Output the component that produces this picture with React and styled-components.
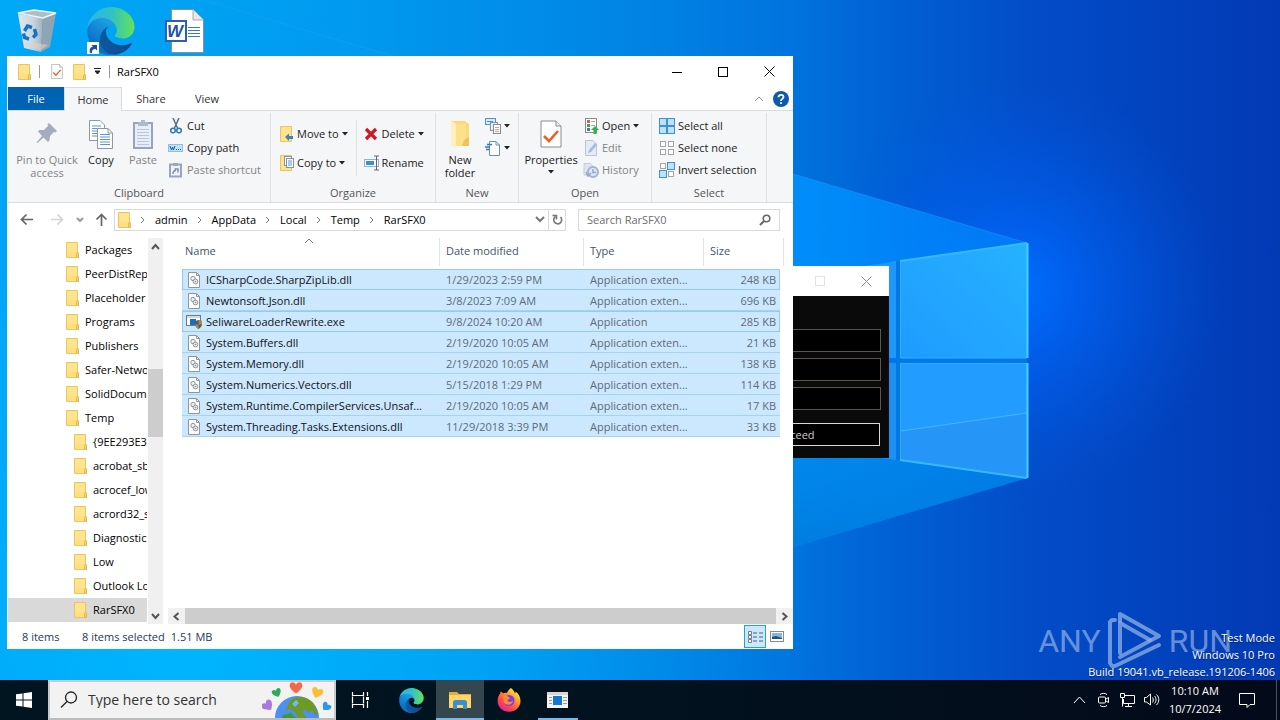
import styled, { createGlobalStyle, css } from "styled-components";

const GlobalStyle = createGlobalStyle`
  * {
    box-sizing: border-box;
  }
  body {
    margin: 0;
    overflow: hidden;
    font-family: "Open Sans", "Noto Sans", sans-serif;
    font-size: 11px;
    line-height: 16px;
    color: #111;
  }
  button, input {
    font: inherit;
    color: inherit;
    border: 0;
    padding: 0;
    margin: 0;
    background: none;
    border-radius: 0;
    outline: none;
  }
  a {
    color: inherit;
    text-decoration: none;
  }
  svg {
    display: block;
    flex: none;
  }
`;

const Screen = styled.div`
  height: 100vh;
  display: flex;
  flex-direction: column;
`;
const Desktop = styled.main`
  position: relative;
  flex: 1;
  min-height: 0;
  overflow: hidden;
  background: #0a7be0;
`;
const WallpaperSvg = styled.svg`
  position: absolute;
  inset: 0;
  width: 100%;
  height: 100%;
`;
const Shortcuts = styled.div`
  position: relative;
  display: flex;
  padding: 7px 0 0 12px;
`;
const Shortcut = styled.button`
  width: 50px;
  height: 48px;
  margin-right: 24px;
  display: flex;
  justify-content: center;
`;

const ExplorerWindow = styled.section`
  position: absolute;
  top: 56px;
  left: 7px;
  right: 487px;
  bottom: 31px;
  display: flex;
  flex-direction: column;
  background: #fff;
  padding: 0 0 0 1px;
`;
const TitleBar = styled.header`
  height: 31px;
  display: flex;
  align-items: center;
  padding: 0 1px 0 10px;
`;
const QuickButton = styled.button`
  width: ${(p) => p.$w}px;
  display: flex;
  justify-content: flex-start;
`;
const TitleLine = styled.span`
  width: 1px;
  height: 13px;
  background: #999;
  margin-right: ${(p) => p.$gap}px;
`;
const Title = styled.h1`
  flex: 1;
  margin: 0;
  font-size: 11px;
  font-weight: 400;
  color: #000;
`;
const CaptionButton = styled.button`
  width: 46px;
  height: 30px;
  display: flex;
  align-items: center;
  justify-content: center;
`;
const TabRow = styled.nav`
  height: 24px;
  display: flex;
  align-items: stretch;
  border-bottom: 1px solid #dadbdc;
`;
const Tab = styled.button`
  width: 56px;
  color: #333;
  ${(p) =>
    p.$file &&
    css`
      background: #0063b1;
      color: #fff;
    `}
  ${(p) =>
    p.$active &&
    css`
      width: 58px;
      margin: 0 1px -1px 0;
      background: #f5f6f7;
      border: 1px solid #dadbdc;
      border-bottom: 0;
    `}
`;
const TabTools = styled.div`
  margin-left: auto;
  display: flex;
  align-items: center;
  gap: 9px;
  padding-right: 4px;
`;

const Ribbon = styled.div`
  height: 92px;
  display: flex;
  background: #f5f6f7;
  border-bottom: 1px solid #dadbdc;
`;
const Group = styled.div`
  width: ${(p) => p.$w}px;
  margin: 2px 0 0;
  display: flex;
  flex-direction: column;
  border-right: 1px solid #dfe1e3;
`;
const GroupBody = styled.div`
  flex: 1;
  display: flex;
  padding: 2px 0 0 ${(p) => p.$pad}px;
`;
const GroupName = styled.div`
  text-align: center;
  color: #555;
  padding-bottom: 1px;
`;
const BigButton = styled.button`
  width: ${(p) => p.$w}px;
  display: flex;
  flex-direction: column;
  align-items: center;
  padding-top: 3px;
  line-height: 13px;
  color: ${(p) => (p.$off ? "#838383" : "#222")};
  svg:first-child {
    margin-bottom: 3px;
  }
`;
const SmallColumn = styled.div`
  display: flex;
  flex-direction: column;
  padding-left: ${(p) => p.$pad || 0}px;
  padding-top: ${(p) => (p.$tall ? 4 : 0)}px;
`;
const SmallButton = styled.button`
  height: ${(p) => (p.$tall ? 29 : 22)}px;
  display: flex;
  align-items: center;
  gap: 3px;
  white-space: nowrap;
  color: ${(p) => (p.$off ? "#838383" : "#222")};
`;
const Divider = styled.span`
  width: 1px;
  height: 56px;
  margin: 5px 0 0 8px;
  background: #e0e2e4;
`;

const AddressRow = styled.div`
  height: 35px;
  display: flex;
  align-items: center;
  padding: 0 13px 2px 12px;
`;
const NavButton = styled.button`
  width: ${(p) => p.$w}px;
  display: flex;
`;
const AddressBox = styled.div`
  flex: 1;
  height: 22px;
  display: flex;
  align-items: center;
  border: 1px solid #d9d9d9;
  padding-left: 3px;
  margin-right: 12px;
`;
const Crumb = styled.a`
  color: #000;
`;
const CrumbArrow = styled.span`
  width: 24px;
  display: flex;
  justify-content: center;
`;
const AddressEnd = styled.button`
  width: 17px;
  height: 20px;
  display: flex;
  align-items: center;
  justify-content: center;
  ${(p) => p.$line && "border-left: 1px solid #d9d9d9;"}
  ${(p) => p.$push && "margin-left: auto;"}
`;
const SearchBox = styled.label`
  width: 202px;
  height: 22px;
  display: flex;
  align-items: center;
  border: 1px solid #d9d9d9;
  padding: 0 8px;
`;
const SearchInput = styled.input`
  flex: 1;
  min-width: 0;
  &::placeholder {
    color: #6d6d6d;
    opacity: 1;
  }
`;

const Panes = styled.div`
  flex: 1;
  min-height: 0;
  display: flex;
`;
const Tree = styled.nav`
  width: 140px;
  overflow: hidden;
`;
const TreeItem = styled.a`
  height: 24px;
  display: flex;
  align-items: center;
  gap: 6px;
  padding-left: ${(p) => (p.$child ? 66 : 58)}px;
  margin-right: 1px;
  white-space: nowrap;
  overflow: hidden;
  color: #000;
  background: ${(p) => (p.$current ? "#d9d9d9" : "transparent")};
`;
const VScroll = styled.div`
  width: 15px;
  display: flex;
  flex-direction: column;
  align-items: center;
  background: #f0f0f0;
`;
const ScrollButton = styled.button`
  width: 17px;
  height: 16px;
  display: flex;
  align-items: center;
  justify-content: center;
`;
const VThumb = styled.div`
  width: 100%;
  height: 68px;
  margin: 115px 0 auto;
  background: #cdcdcd;
`;
const FilePane = styled.div`
  flex: 1;
  min-width: 0;
  display: flex;
  flex-direction: column;
  padding-left: 5px;
`;
const TableWrap = styled.div`
  flex: 1;
  min-height: 0;
  padding: 0 13px 0 14px;
`;
const FileTable = styled.table`
  width: 100%;
  table-layout: fixed;
  border-spacing: 0;
`;
const Th = styled.th`
  position: relative;
  height: 31px;
  padding: 0 0 6px ${(p) => (p.$first ? 3 : 7)}px;
  text-align: left;
  font-weight: 400;
  color: #43536e;
  &::after {
    content: "";
    position: absolute;
    top: 0;
    right: ${(p) => (p.$last ? -4 : -1)}px;
    width: 1px;
    height: 28px;
    background: #e0e3e8;
  }
`;
const SortMark = styled.span`
  position: absolute;
  top: 0;
  left: 122px;
`;
const Row = styled.tr`
  background: #cce8ff;
  ${(p) =>
    p.$outlined &&
    css`
      outline: 1px solid #93cbf2;
      outline-offset: -1px;
    `}
`;
const Td = styled.td`
  height: 21px;
  padding: 0 4px 0 7px;
  box-shadow: inset 0 -1px #a6d3f4;
  white-space: nowrap;
  overflow: hidden;
  text-overflow: ellipsis;
  color: #5d6b78;
  text-align: ${(p) => (p.$right ? "right" : "left")};
`;
const FileName = styled.span`
  display: flex;
  align-items: center;
  gap: 4px;
  margin-left: -3px;
  color: #111;
`;
const HScroll = styled.div`
  height: 16px;
  display: flex;
  align-items: center;
  background: #f0f0f0;
`;
const HThumb = styled.div`
  flex: 1;
  height: 16px;
  background: #cdcdcd;
`;
const StatusBar = styled.footer`
  height: 25px;
  display: flex;
  align-items: center;
  padding: 0 5px 0 14px;
  color: #24385e;
  span:first-child {
    width: 60px;
  }
  span:nth-child(2) {
    margin-right: 6px;
  }
`;
const ViewButton = styled.button`
  width: 22px;
  height: 23px;
  display: flex;
  align-items: center;
  justify-content: center;
  ${(p) => p.$on && "background: #cce8ff; border: 1px solid #26a0da;"}
`;
const ViewButtons = styled.div`
  display: flex;
  margin-left: auto;
`;

const LoaderWindow = styled.section`
  position: absolute;
  top: 266px;
  right: 391px;
  width: 190px;
  background: #0a0a0a;
`;
const LoaderTitle = styled.header`
  height: 30px;
  display: flex;
  justify-content: flex-end;
  background: #fff;
`;
const LoaderForm = styled.div`
  padding: 33px 8px 12px;
  display: flex;
  flex-direction: column;
  gap: 6px;
`;
const LoaderInput = styled.input`
  height: 23px;
  width: 100%;
  background: #000;
  border: 1px solid #5e554b;
  color: #fff;
`;
const LoaderButton = styled.button`
  height: 23px;
  margin: 7px 1px 0 0;
  background: #000;
  border: 1px solid #d8d8d8;
  color: #ccc;
`;

const BuildInfo = styled.div`
  position: absolute;
  right: 5px;
  bottom: 0;
  text-align: right;
  color: #fff;
  line-height: 17px;
  text-shadow: 0 1px 1px rgba(0, 0, 0, 0.5);
`;
const Watermark = styled.div`
  position: absolute;
  right: 48px;
  bottom: 9px;
  display: flex;
  align-items: center;
  gap: 6px;
  font-family: Roboto, "Open Sans", sans-serif;
  font-size: 32px;
  line-height: 60px;
  color: rgba(190, 210, 240, 0.55);
`;

const Taskbar = styled.footer`
  height: 40px;
  display: flex;
  align-items: stretch;
  background: linear-gradient(90deg, #001520, #02121f 50%, #030a1a);
  color: #fff;
`;
const StartButton = styled.button`
  width: 48px;
  display: flex;
  align-items: center;
  justify-content: center;
`;
const TaskSearch = styled.label`
  width: 288px;
  display: flex;
  align-items: center;
  padding: 0 2px 0 10px;
  gap: 10px;
  background: #f2f2f2;
  border: 2px solid #c8cacb;
  border-bottom-color: #b9bbbc;
  color: #222;
`;
const TaskSearchInput = styled.input`
  flex: 1;
  min-width: 0;
  font-size: 14px;
  &::placeholder {
    color: #333;
    opacity: 1;
  }
`;
const TaskButton = styled.button`
  width: 48px;
  margin-right: ${(p) => (p.$first ? 3 : 1)}px;
  display: flex;
  align-items: center;
  justify-content: center;
  background: ${(p) => (p.$active ? "#35464f" : "transparent")};
  ${(p) => p.$active && "box-shadow: inset 0 -2px #76b9ed;"}
  ${(p) =>
    p.$running &&
    css`
      background: linear-gradient(#76b9ed, #76b9ed) center bottom / 40px 2px
        no-repeat;
    `}
`;
const Tray = styled.div`
  margin-left: auto;
  display: flex;
  align-items: center;
`;
const TrayButton = styled.button`
  width: 24px;
  height: 40px;
  display: flex;
  align-items: center;
  justify-content: center;
`;
const Clock = styled.div`
  width: 64px;
  text-align: center;
  line-height: 18px;
`;
const Notices = styled.button`
  width: 50px;
  height: 40px;
  display: flex;
  align-items: center;
  padding-left: 12px;
  border-right: 1px solid #4a5462;
  margin-right: 3px;
`;

const Icon = ({ w = 16, h = w, box, children }) => (
  <svg
    width={w}
    height={h}
    viewBox={box || `0 0 ${w} ${h}`}
    fill="none"
    aria-hidden="true"
  >
    {children}
  </svg>
);

const FolderIcon = () => (
  <Icon w={13} h={16}>
    <path d="M0.5 0.5H11.5V10L12.5 11V15.5H0.5Z" fill="#ffe48f" stroke="#ecc65c" />
    <path d="M1 15V9L10 10V15Z" fill="#ffdf82" />
    <path d="M10.5 15.5V11.5L11.5 10L12.5 12V15.5Z" fill="#f7d36b" stroke="#e3b94c" />
  </Icon>
);

const CaretIcon = () => (
  <Icon w={6} h={4}>
    <path d="M0 0H6L3 3.500Z" fill="#222" />
  </Icon>
);

const ChevronIcon = ({ d, w = 9, h = 9, color = "#555", sw = 2 }) => (
  <Icon w={w} h={h}>
    <path d={d} stroke={color} strokeWidth={sw} />
  </Icon>
);

const CloseIcon = ({ color = "#000" }) => (
  <Icon w={11}>
    <path d="M0.5 0.5L10.5 10.5M10.5 0.5L0.5 10.5" stroke={color} />
  </Icon>
);

const MaxIcon = ({ color = "#000" }) => (
  <Icon w={10}>
    <rect x="0.5" y="0.5" width="9" height="9" stroke={color} />
  </Icon>
);

const PropsIcon = ({ w = 12, h = 15 }) => (
  <Icon w={w} h={h} box="0 0 22 28">
    <path d="M1 1H16L21 6V27H1Z" fill="#fff" stroke="#8c8c8c" />
    <path d="M16 1V6H21" fill="#eee" stroke="#8c8c8c" />
    <path d="M4 16L9 21L18 11" stroke="#e2622b" strokeWidth="2.6" />
  </Icon>
);

const PinIcon = () => (
  <Icon w={22} h={32}>
    <path
      d="M13 5L21 13L19.500 14.500L18 14L14 18L13.500 22.500L12 24L7.500 19.500L1.500 25L0.500 24.500L6 18L2 13.500L3.500 12L8 12L12 8L11.500 6.500Z"
      fill="#a3adbd"
    />
  </Icon>
);

const SheetLines = ({ x, y, n = 5, w = 9 }) => (
  <g stroke="#5d94d6">
    {Array.from({ length: n }, (_, i) => (
      <path key={i} d={`M${x} ${y + i * 2.5}h${w}`} />
    ))}
  </g>
);

const CopyIcon = () => (
  <Icon w={26} h={32}>
    <path d="M1.500 2.500H12L16.500 7V22.500H1.500Z" fill="#fff" stroke="#8d98a5" />
    <SheetLines x={4} y={8} n={5} />
    <path d="M9.500 10.500H20L24.500 15V30.500H9.500Z" fill="#fff" stroke="#8d98a5" />
    <path d="M20 10.500V15H24.500" stroke="#8d98a5" />
    <SheetLines x={12} y={16.5} n={5} w={10} />
  </Icon>
);

const PasteIcon = () => (
  <Icon w={20} h={32}>
    <rect x="1" y="5" width="18" height="25" fill="#e9eef6" stroke="#98a4bc" strokeWidth="2" />
    <path d="M5 4H8V2H12V4H15V8H5Z" fill="#b0b9ca" />
    <g stroke="#b8c6de">
      <path d="M4 11.500H16M4 14.500H16M4 17.500H16M4 20.500H16M4 23.500H16M4 26.500H16" />
    </g>
  </Icon>
);

const CutIcon = () => (
  <Icon>
    <path d="M5 0L9.500 10M11 0L6.500 10" stroke="#5b6b7a" strokeWidth="1.500" />
    <circle cx="5" cy="12.500" r="2.300" stroke="#2f78b7" strokeWidth="1.500" />
    <circle cx="11" cy="12.500" r="2.300" stroke="#2f78b7" strokeWidth="1.500" />
  </Icon>
);

const CopyPathIcon = () => (
  <Icon>
    <rect x="0.500" y="4.500" width="14" height="7" fill="#bfe2f8" stroke="#8cc0e2" />
    <path d="M2 6L3.500 10L4.500 7L5.500 10L7 6M8 9.500H9M10 9.500H11M12 9.500H13" stroke="#245a8a" />
  </Icon>
);

const PasteShortcutIcon = () => (
  <Icon>
    <rect x="2" y="2.500" width="11" height="12" fill="#eef2f8" stroke="#98a5bd" strokeWidth="2" />
    <path d="M5 1H10V4H5Z" fill="#98a5bd" />
    <path d="M5 12C5 9.500 6.500 8.500 8 8.500M6.500 7H10V10.500" stroke="#7f90b0" strokeWidth="1.500" />
  </Icon>
);

const MoveToIcon = () => (
  <Icon w={14} h={16}>
    <path d="M0.500 0.500H11.500V15.500H0.500Z" fill="#ffe48f" stroke="#ecc65c" />
    <path d="M5 11L9 7.500V10H13V13H9V15Z" fill="#3c82cb" />
  </Icon>
);

const CopyToIcon = () => (
  <Icon w={14} h={16}>
    <path d="M0.500 0.500H11.500V15.500H0.500Z" fill="#ffe48f" stroke="#ecc65c" />
    <rect x="4.500" y="1.500" width="7" height="9" fill="#fff" stroke="#7f93ab" />
    <rect x="6.500" y="3.500" width="7" height="9" fill="#fff" stroke="#7f93ab" />
    <path d="M8 6H12M8 8H12M8 10H12" stroke="#5d94d6" />
  </Icon>
);

const DeleteIcon = () => (
  <Icon w={15} h={16}>
    <path d="M2 3L12 13M12 3L2 13" stroke="#d3161f" strokeWidth="3.200" />
  </Icon>
);

const RenameIcon = () => (
  <Icon w={15} h={16}>
    <rect x="0.500" y="4.500" width="14" height="7" fill="#fff" stroke="#8ab7d8" />
    <rect x="2" y="6" width="8" height="4" fill="#3e8fd0" />
    <path d="M10 1H12.500V15H10M12.500 1H15M12.500 15H15" stroke="#666" />
  </Icon>
);

const NewFolderIcon = () => (
  <Icon w={20} h={32}>
    <path d="M1 3H15L19 6V28H5L1 26Z" fill="#f9d978" />
    <path d="M1 3L6 6V30L1 27Z" fill="#fff0bd" />
    <path d="M6 6H16V28H6Z" fill="#ffe08a" />
    <path d="M14 22L19 19V28H12Z" fill="#eec35a" />
  </Icon>
);

const NewItemIcon = () => (
  <Icon>
    <rect x="0.500" y="0.500" width="10" height="6" fill="#d7ecfa" stroke="#4f94c4" />
    <path d="M2 3.500H8" stroke="#4f94c4" />
    <rect x="5.500" y="4.500" width="7" height="8" fill="#e8f0f8" stroke="#7f93ab" />
    <rect x="8.500" y="6.500" width="7" height="9" fill="#fff" stroke="#8a8a8a" />
    <path d="M10 9.500H14M10 11.500H14M10 13.500H14" stroke="#e29a8a" />
  </Icon>
);

const EasyAccessIcon = () => (
  <Icon>
    <path d="M4.500 1.500H11L14.500 5V15.500H4.500Z" fill="#fff" stroke="#6f8fb0" />
    <path d="M11 1.500V5H14.500" stroke="#6f8fb0" />
    <path d="M2 4.500H7M0 7H5M1 9.500H4" stroke="#2f78c7" strokeWidth="1.500" />
  </Icon>
);

const OpenIcon = () => (
  <Icon>
    <rect x="2.500" y="0.500" width="11" height="14" fill="#fff" stroke="#8a8a8a" />
    <path d="M4 2H7V5H4Z" fill="#d3663f" />
    <path d="M4 6H7V9H4Z" fill="#4a9a58" />
    <path d="M4 10H7V13H4Z" fill="#4179bd" />
    <path d="M8 3.500H12M8 7.500H12" stroke="#aaa" />
    <path d="M8 12L12 8L16 12H13.500V16H10.500V12Z" fill="#33b24c" />
  </Icon>
);

const EditIcon = () => (
  <Icon>
    <path d="M2.500 0.500H10L13.500 4V15.500H2.500Z" fill="#e3ebf6" stroke="#b7c5dc" />
    <path d="M5 13L6 10L12 3L14 5L8 12Z" fill="#a9badb" />
  </Icon>
);

const HistoryIcon = () => (
  <Icon>
    <path d="M1 1.500H7L11 5V13H1Z" fill="#dce5f2" stroke="#c2cee2" />
    <circle cx="10" cy="10" r="5" fill="#dfe7f4" stroke="#a3b3d2" strokeWidth="2" />
    <path d="M10 7V10.500H13M3 10L5 14L8 11" stroke="#93a5c8" strokeWidth="1.500" />
  </Icon>
);

const selectShapes = {
  all: [1, 1, 1, 1],
  none: [0, 0, 0, 0],
  invert: [0, 1, 1, 0],
};
const SelectIcon = ({ kind }) => (
  <Icon>
    {selectShapes[kind].map((on, i) => {
      const x = (i % 2) * 8;
      const y = Math.floor(i / 2) * 8;
      return on ? (
        <rect key={i} x={x + 0.5} y={y + 0.5} width="7" height="7" fill="#bfe1fb" stroke="#3a93d9" />
      ) : (
        <rect key={i} x={x + 1.5} y={y + 1.5} width="5" height="5" fill="#fff" stroke="#a5a5a5" />
      );
    })}
  </Icon>
);

const ArrowIcon = ({ d, color }) => (
  <Icon w={13}>
    <path d={d} stroke={color} strokeWidth="1.700" />
  </Icon>
);

const DllIcon = () => (
  <Icon w={16}>
    <path d="M2.500 0.500H10.500L13.500 3.500V15.500H2.500Z" fill="#fff" stroke="#8d969e" />
    <path d="M10.500 0.500V3.500H13.500" stroke="#8d969e" />
    <circle cx="7" cy="6.500" r="2.200" fill="#eee" stroke="#8d969e" />
    <circle cx="9.500" cy="9.500" r="2.400" fill="#e8e8e8" stroke="#8d969e" />
    <circle cx="9.500" cy="9.500" r="0.800" fill="#8d969e" />
  </Icon>
);

const ExeIcon = () => (
  <Icon>
    <rect x="0.500" y="1.500" width="14" height="10" fill="#fff" stroke="#6c7a86" />
    <path d="M1 3H14" stroke="#a9b4bd" />
    <rect x="4" y="5" width="6" height="6" fill="#1670c8" />
    <path d="M9 7L12.500 6L16 7V10C16 12.500 14 14 12.500 15C11 14 9 12.500 9 10Z" fill="#4b5d70" />
    <path d="M12.500 6L16 7V10.500H12.500ZM9 10.500H12.500V15C11 14 9 12.500 9 10.500Z" fill="#b08a4a" />
  </Icon>
);

const EdgeIcon = ({ w, id }) => (
  <Icon w={w} box="0 0 257 260">
    <defs>
      <linearGradient id={`${id}a`} x1="63" y1="178" x2="241" y2="178" gradientUnits="userSpaceOnUse">
        <stop stopColor="#0c59a4" />
        <stop offset="1" stopColor="#114a8b" />
      </linearGradient>
      <linearGradient id={`${id}b`} x1="130" y1="100" x2="45" y2="210" gradientUnits="userSpaceOnUse">
        <stop stopColor="#1b9de2" />
        <stop offset="1" stopColor="#0a6fc4" />
      </linearGradient>
      <linearGradient id={`${id}c`} x1="10" y1="90" x2="245" y2="100" gradientUnits="userSpaceOnUse">
        <stop stopColor="#2bb5ec" />
        <stop offset="0.5" stopColor="#2fc2c4" />
        <stop offset="1" stopColor="#5fe05f" />
      </linearGradient>
    </defs>
    <path fill={`url(#${id}a)`} d="M235.680 195.600a93.730 93.730 0 0 1-10.540 4.710 101.870 101.870 0 0 1-35.900 6.460c-47.320 0-88.540-32.550-88.540-74.320A31.480 31.480 0 0 1 117.130 105c-42.800 1.800-53.800 46.400-53.800 72.530 0 73.880 68.090 81.370 82.760 81.370 7.910 0 19.840-2.300 27-4.560l1.310-.44a128.340 128.340 0 0 0 66.600-52.800 4 4 0 0 0-5.320-5.500z" />
    <path fill={`url(#${id}b)`} d="M105.730 246.400a79.200 79.200 0 0 1-22.740-21.340 80.720 80.720 0 0 1 29.530-120c3.120-1.470 8.450-4.130 15.540-4a32.350 32.350 0 0 1 25.690 13 31.880 31.880 0 0 1 6.360 18.660c0-.21 24.460-79.600-80-79.600-43.900 0-80 41.660-80 78.210a130.150 130.150 0 0 0 12.110 56 128 128 0 0 0 156.380 67.110 75.550 75.550 0 0 1-62.780-8z" />
    <path fill={`url(#${id}c)`} d="M152.330 148.860c-.81 1.050-3.300 2.500-3.300 5.660 0 2.610 1.700 5.120 4.720 7.230 14.380 10 41.490 8.680 41.560 8.680a59.560 59.560 0 0 0 30.270-8.350 61.380 61.380 0 0 0 30.430-52.880c.26-22.410-8-37.310-11.340-43.910-21.190-41.420-66.930-65.250-116.670-65.250a128 128 0 0 0-128 126.200c.48-36.540 36.800-66.050 80-66.050 3.500 0 23.460.34 42 10.070 16.340 8.580 24.900 18.940 30.850 29.210 6.180 10.670 7.280 24.150 7.280 29.520s-2.740 13.330-7.800 19.870z" />
  </Icon>
);

const RecycleBinIcon = () => (
  <Icon w={40} h={48}>
    <defs>
      <linearGradient id="bin" x1="0" x2="1">
        <stop stopColor="#dfe8ee" />
        <stop offset="0.6" stopColor="#c9d6de" />
        <stop offset="1" stopColor="#9fb1bd" />
      </linearGradient>
    </defs>
    <path d="M1 7L26 11L24 45L7 41Z" fill="url(#bin)" />
    <path d="M26 11L39 6L33 40L24 45Z" fill="#8fa5b3" />
    <path d="M1 6L17 3L39 6L26 11Z" fill="#aebec8" stroke="#eef4f7" strokeWidth="1.500" />
    <path d="M8 38L20 36L31 38L24 43Z" fill="#e3cfc5" opacity="0.6" />
    <g stroke="#1673c4" strokeWidth="3.500">
      <path d="M7.500 24L10.500 19L15 20.500" />
      <path d="M17.500 22L19 27.500L16 30.500" />
      <path d="M12 32L7.500 30.500L6.500 26.500" />
    </g>
  </Icon>
);

const EdgeShortcutIcon = () => (
  <Icon w={48}>
    <EdgeIcon w={48} id="desk" />
    <rect x="0" y="35" width="12" height="12" fill="#fff" />
    <path d="M3 46C2 42 3.500 40 6 39.500L4.500 38H10V43.500L8.500 42C6 42 4.500 43.500 5 46Z" fill="#1f4f9c" />
  </Icon>
);

const WordIcon = () => (
  <Icon w={40} h={48}>
    <path d="M6.500 2.500H28L38.500 13V45.500H6.500Z" fill="#fff" stroke="#8a8f96" />
    <path d="M28 2.500V13H38.500" fill="#e8e8e8" stroke="#a3a8ae" />
    <path d="M23 20.500H35M23 23.500H35M23 26.500H35M23 29.500H35" stroke="#3c78c4" />
    <rect x="1" y="14" width="20" height="20" fill="#fff" stroke="#2b5fb4" strokeWidth="2" />
    <text x="2" y="30" fontFamily="Liberation Sans" fontSize="17" fontWeight="700" fontStyle="italic" fill="#2450a4">
      W
    </text>
  </Icon>
);

const ExplorerIcon = () => (
  <Icon w={24}>
    <path d="M1 4H9L11 6H23V20H1Z" fill="#f0a830" />
    <path d="M1 7H23V20H1Z" fill="#ffd668" />
    <path d="M5 21V14C5 13 6 12 7 12H17C18 12 19 13 19 14V21H15V17H9V21Z" fill="#3b90d4" />
  </Icon>
);

const FirefoxIcon = () => (
  <Icon w={24}>
    <defs>
      <linearGradient id="fox" x1="20" y1="2" x2="5" y2="22" gradientUnits="userSpaceOnUse">
        <stop stopColor="#fff04a" />
        <stop offset="0.35" stopColor="#ff9a2a" />
        <stop offset="0.7" stopColor="#ff4a45" />
        <stop offset="1" stopColor="#e5219a" />
      </linearGradient>
    </defs>
    <path
      d="M14 0C16.500 2 17.500 4 18 5.500C18.800 4.800 18.500 4 18.500 3.500C21.500 5.500 23.500 9 23.500 13C23.500 19 18.500 23.800 12 23.800C5.500 23.800 0.600 19 0.600 13C0.600 9.500 1.500 7.500 3.200 5.500L3.800 3.200L6 5.200C7.500 4.500 9 4.500 10 5C11 2.500 12.500 1.200 14 0Z"
      fill="url(#fox)"
    />
    <circle cx="12" cy="12.500" r="5.500" fill="#7a3fe0" />
    <path d="M6 8C8 7 10.500 7.500 11.500 9C13.500 9.500 13 11.500 10.500 11.500C10 14 14 15 16 12.500C16 17 9 18.500 6.500 14Z" fill="#ff8a2e" />
  </Icon>
);

const AppIcon = () => (
  <Icon w={24}>
    <rect x="1" y="4" width="21" height="16" fill="#f4f4f4" />
    <path d="M1 4H22V7H1Z" fill="#d5d8da" />
    <rect x="7" y="8" width="9" height="9" fill="#1478d4" />
    <path d="M3 9.500H6M3 12.500H6M3 15.500H6M17 9.500H21M17 12.500H21M17 15.500H21" stroke="#999" />
  </Icon>
);

const heart = "M0 -3C-2 -7 -7 -5 -5.500 -1C-4.500 1.500 -2 3.500 0 5C2 3.500 4.500 1.500 5.500 -1C7 -5 2 -7 0 -3Z";
const EarthArt = () => (
  <Icon w={70} h={36}>
    <circle cx="35" cy="36" r="22" fill="#4d8ff2" />
    <path d="M27 20C33 13 45 13 52 22L56 31L54 34L50 28L46 31L44 27L40 30L45 36H36L33 30L28 27L23 29L26 23Z" fill="#6d9a22" />
    <path d="M21 33L29 31L34 36H20Z" fill="#3f9a2f" />
    <path d="M30 22L34 18L37 21L33 25Z" fill="#70b7fb" />
    <path d={heart} transform="translate(34 6) scale(1.1)" fill="#f4694b" />
    <path d={heart} transform="translate(15 11) rotate(-25) scale(.8)" fill="#2faa5a" />
    <path d={heart} transform="translate(55 11) rotate(20)" fill="#fbbd35" />
    <path d={heart} transform="translate(6 24) rotate(-40)" fill="#a978dd" />
    <path d={heart} transform="translate(64 25) rotate(40) scale(.8)" fill="#2e94e4" />
  </Icon>
);

const Wallpaper = () => (
  <WallpaperSvg viewBox="0 0 1280 680" preserveAspectRatio="none" aria-hidden="true">
    <defs>
      <linearGradient id="sky" x1="0" x2="1">
        <stop stopColor="#00a8f6" />
        <stop offset="0.25" stopColor="#009cf1" />
        <stop offset="0.5" stopColor="#0084e4" />
        <stop offset="0.62" stopColor="#0073de" />
        <stop offset="0.7" stopColor="#0060d3" />
        <stop offset="0.8" stopColor="#034dc9" />
        <stop offset="0.9" stopColor="#0243be" />
        <stop offset="1" stopColor="#023ab4" />
      </linearGradient>
      <radialGradient id="glow" cx="1015" cy="290" r="210" gradientUnits="userSpaceOnUse">
        <stop stopColor="#0070ff" />
        <stop offset="0.3" stopColor="#0064f6" stopOpacity="0.75" />
        <stop offset="1" stopColor="#0055e0" stopOpacity="0" />
      </radialGradient>
      <radialGradient id="corner" cx="180" cy="640" r="640" gradientUnits="userSpaceOnUse">
        <stop stopColor="#00b6ff" />
        <stop offset="0.5" stopColor="#00a8f8" stopOpacity="0.7" />
        <stop offset="1" stopColor="#0090f0" stopOpacity="0" />
      </radialGradient>
      <linearGradient id="beam" x1="0" x2="1027" gradientUnits="userSpaceOnUse">
        <stop stopColor="#00a9f7" />
        <stop offset="0.25" stopColor="#009ff2" />
        <stop offset="0.6" stopColor="#0090ee" />
        <stop offset="0.78" stopColor="#008dfa" />
        <stop offset="1" stopColor="#0082fb" stopOpacity="0.7" />
      </linearGradient>
      <linearGradient id="shade" x1="0" y1="300" x2="0" y2="560" gradientUnits="userSpaceOnUse">
        <stop stopColor="#007cdc" stopOpacity="0" />
        <stop offset="0.6" stopColor="#0084e2" stopOpacity="0.55" />
        <stop offset="1" stopColor="#0078da" stopOpacity="0.9" />
      </linearGradient>
      <linearGradient id="pane" x1="0" y1="1" x2="1" y2="0">
        <stop stopColor="#1f9bff" />
        <stop offset="1" stopColor="#25b2ff" />
      </linearGradient>
    </defs>
    <rect width="1280" height="680" fill="url(#sky)" />
    <rect width="1280" height="680" fill="url(#glow)" />
    <path d="M0 0H203L1027 243V478L340 680H0Z" fill="url(#beam)" />
    <path d="M700 300H1027V478L700 574Z" fill="url(#shade)" />
    <rect width="1280" height="680" fill="url(#corner)" />
    <path d="M203 0L1027 243" stroke="#27a0ff" opacity="0.4" />
    <path d="M886 263L896 261V358H760V280Z" fill="#1e98fb" />
    <path d="M760 363H896V460L760 442Z" fill="#1e90f4" />
    <path d="M898 261V460M889 360.500H1027" stroke="#0078e6" strokeWidth="4" />
    <path d="M900.500 261.500L1027 243.500V358H900.500Z" fill="url(#pane)" stroke="#30aeff" />
    <path d="M900.500 363.500H1027V478L900.500 460Z" fill="#229dff" stroke="#30aaff" />
    <path d="M901 431L1027 413V477L901 459Z" fill="#2596f8" />
    <path d="M901 431L1027 413" stroke="#3fb8ff" />
    <path d="M1027.500 243V358M1027.500 363V478" stroke="#45d2ff" strokeWidth="2" />
    <path d="M900 261L1027 243M900 460L1027 478" stroke="#38b8ff" strokeWidth="2" />
  </WallpaperSvg>
);

const files = [
  { name: "ICSharpCode.SharpZipLib.dll", date: "1/29/2023 2:59 PM", size: "248 KB", outlined: true },
  { name: "Newtonsoft.Json.dll", date: "3/8/2023 7:09 AM", size: "696 KB" },
  { name: "SeliwareLoaderRewrite.exe", date: "9/8/2024 10:20 AM", size: "285 KB", exe: true, outlined: true },
  { name: "System.Buffers.dll", date: "2/19/2020 10:05 AM", size: "21 KB" },
  { name: "System.Memory.dll", date: "2/19/2020 10:05 AM", size: "138 KB" },
  { name: "System.Numerics.Vectors.dll", date: "5/15/2018 1:29 PM", size: "114 KB" },
  { name: "System.Runtime.CompilerServices.Unsaf...", date: "2/19/2020 10:05 AM", size: "17 KB" },
  { name: "System.Threading.Tasks.Extensions.dll", date: "11/29/2018 3:39 PM", size: "33 KB" },
];

const folders = [
  "Packages",
  "PeerDistRepub",
  "Placeholder",
  "Programs",
  "Publishers",
  "Safer-Networking",
  "SolidDocuments",
  "Temp",
];
const tempFolders = [
  "{9EE293E3-",
  "acrobat_sbx",
  "acrocef_low",
  "acrord32_sbx",
  "Diagnostics",
  "Low",
  "Outlook Logging",
  "RarSFX0",
];
const crumbs = ["admin", "AppData", "Local", "Temp", "RarSFX0"];

const RibbonBar = () => (
  <Ribbon>
    <Group $w={263}>
      <GroupBody $pad={4}>
        <BigButton $w={70} $off>
          <PinIcon />
          Pin to Quick
          <br />
          access
        </BigButton>
        <BigButton $w={38}>
          <CopyIcon />
          Copy
        </BigButton>
        <BigButton $w={46} $off>
          <PasteIcon />
          Paste
        </BigButton>
        <SmallColumn $pad={2}>
          <SmallButton>
            <CutIcon /> Cut
          </SmallButton>
          <SmallButton>
            <CopyPathIcon /> Copy path
          </SmallButton>
          <SmallButton $off>
            <PasteShortcutIcon /> Paste shortcut
          </SmallButton>
        </SmallColumn>
      </GroupBody>
      <GroupName>Clipboard</GroupName>
    </Group>
    <Group $w={165}>
      <GroupBody $pad={9}>
        <SmallColumn $tall>
          <SmallButton $tall>
            <MoveToIcon /> Move to <CaretIcon />
          </SmallButton>
          <SmallButton $tall>
            <CopyToIcon /> Copy to <CaretIcon />
          </SmallButton>
        </SmallColumn>
        <Divider />
        <SmallColumn $tall $pad={7}>
          <SmallButton $tall>
            <DeleteIcon /> Delete <CaretIcon />
          </SmallButton>
          <SmallButton $tall>
            <RenameIcon /> Rename
          </SmallButton>
        </SmallColumn>
      </GroupBody>
      <GroupName>Organize</GroupName>
    </Group>
    <Group $w={83}>
      <GroupBody $pad={4}>
        <BigButton $w={40}>
          <NewFolderIcon />
          New
          <br />
          folder
        </BigButton>
        <SmallColumn $pad={5}>
          <SmallButton aria-label="New item">
            <NewItemIcon /> <CaretIcon />
          </SmallButton>
          <SmallButton aria-label="Easy access">
            <EasyAccessIcon /> <CaretIcon />
          </SmallButton>
        </SmallColumn>
      </GroupBody>
      <GroupName>New</GroupName>
    </Group>
    <Group $w={133}>
      <GroupBody $pad={4}>
        <BigButton $w={56}>
          <PropsIcon w={22} h={32} />
          Properties
          <Icon w={6} h={12}>
            <path d="M0 4H6L3 7.500Z" fill="#222" />
          </Icon>
        </BigButton>
        <SmallColumn $pad={4}>
          <SmallButton>
            <OpenIcon /> Open <CaretIcon />
          </SmallButton>
          <SmallButton $off>
            <EditIcon /> Edit
          </SmallButton>
          <SmallButton $off>
            <HistoryIcon /> History
          </SmallButton>
        </SmallColumn>
      </GroupBody>
      <GroupName>Open</GroupName>
    </Group>
    <Group $w={115}>
      <GroupBody $pad={7}>
        <SmallColumn>
          <SmallButton>
            <SelectIcon kind="all" /> Select all
          </SmallButton>
          <SmallButton>
            <SelectIcon kind="none" /> Select none
          </SmallButton>
          <SmallButton>
            <SelectIcon kind="invert" /> Invert selection
          </SmallButton>
        </SmallColumn>
      </GroupBody>
      <GroupName>Select</GroupName>
    </Group>
  </Ribbon>
);

const FileList = () => (
  <FileTable>
    <colgroup>
      <col />
      <col width="144" />
      <col width="120" />
      <col width="77" />
    </colgroup>
    <thead>
      <tr>
        <Th $first>
          Name
          <SortMark>
            <ChevronIcon d="M1 5L5 1L9 5" w={10} h={6} color="#777" sw={1} />
          </SortMark>
        </Th>
        <Th>Date modified</Th>
        <Th>Type</Th>
        <Th $last>Size</Th>
      </tr>
    </thead>
    <tbody>
      {files.map((file) => (
        <Row key={file.name} $outlined={file.outlined}>
          <Td>
            <FileName>
              {file.exe ? <ExeIcon /> : <DllIcon />}
              {file.name}
            </FileName>
          </Td>
          <Td>{file.date}</Td>
          <Td>{file.exe ? "Application" : "Application exten..."}</Td>
          <Td $right>{file.size}</Td>
        </Row>
      ))}
    </tbody>
  </FileTable>
);

const Explorer = () => (
  <ExplorerWindow>
    <TitleBar>
      <QuickButton $w={21} aria-label="Window menu">
        <FolderIcon />
      </QuickButton>
      <TitleLine $gap={11} />
      <QuickButton $w={22} aria-label="Properties">
        <PropsIcon />
      </QuickButton>
      <QuickButton $w={21} aria-label="New folder">
        <FolderIcon />
      </QuickButton>
      <QuickButton $w={15} aria-label="Customize toolbar">
        <Icon w={7} h={7}>
          <path d="M0 0.500H7M1 3H6L3.500 6Z" stroke="#222" fill="#222" />
        </Icon>
      </QuickButton>
      <TitleLine $gap={7} />
      <Title>RarSFX0</Title>
      <CaptionButton aria-label="Minimize">
        <Icon w={10}>
          <path d="M0 5.500H10" stroke="#000" />
        </Icon>
      </CaptionButton>
      <CaptionButton aria-label="Maximize">
        <MaxIcon />
      </CaptionButton>
      <CaptionButton aria-label="Close">
        <CloseIcon />
      </CaptionButton>
    </TitleBar>
    <TabRow>
      <Tab $file>File</Tab>
      <Tab $active>Home</Tab>
      <Tab>Share</Tab>
      <Tab>View</Tab>
      <TabTools>
        <ChevronIcon d="M1 6L5 2L9 6" w={10} h={8} color="#999" sw={1} />
        <Icon w={16}>
          <circle cx="8" cy="8" r="8" fill="#0b5cad" />
          <path d="M5.500 6.300C5.500 3 10.500 3 10.500 6C10.500 8 8 7.800 8 10M8 11.200V13" stroke="#fff" strokeWidth="1.800" />
        </Icon>
      </TabTools>
    </TabRow>
    <RibbonBar />
    <AddressRow>
      <NavButton $w={31} aria-label="Back">
        <ArrowIcon d="M13 6.500H2M6.500 1.500L1.500 6.500L6.500 11.500" color="#666" />
      </NavButton>
      <NavButton $w={25} aria-label="Forward">
        <ArrowIcon d="M0 6.500H11M6.500 1.500L11.500 6.500L6.500 11.500" color="#d3d3d3" />
      </NavButton>
      <NavButton $w={19} aria-label="Recent locations">
        <ChevronIcon d="M1 2L4 5L7 2" w={8} h={7} color="#999" />
      </NavButton>
      <NavButton $w={19} aria-label="Up">
        <ArrowIcon d="M6.500 13V2M1.500 6.500L6.500 1.500L11.500 6.500" color="#666" />
      </NavButton>
      <AddressBox>
        <FolderIcon />
        {crumbs.map((crumb) => [
          <CrumbArrow key={`${crumb}-arrow`}>
            <ChevronIcon d="M1 1L4 4L1 7" w={6} h={8} color="#777" sw={1} />
          </CrumbArrow>,
          <Crumb key={crumb} href="#">
            {crumb}
          </Crumb>,
        ])}
        <AddressEnd $push aria-label="Previous locations">
          <ChevronIcon d="M1 2L5 6L9 2" w={10} h={9} color="#777" />
        </AddressEnd>
        <AddressEnd $line aria-label="Refresh">
          <Icon w={11}>
            <path d="M8.500 3A4 4 0 1 1 3.500 2.500" stroke="#777" strokeWidth="1.600" />
            <path d="M0.500 1.500H4.500V5.500" stroke="#777" strokeWidth="1.600" />
          </Icon>
        </AddressEnd>
      </AddressBox>
      <SearchBox>
        <SearchInput aria-label="Search RarSFX0" placeholder="Search RarSFX0" />
        <Icon w={12}>
          <circle cx="7.500" cy="4.500" r="3.300" stroke="#666" strokeWidth="1.600" />
          <path d="M5 7L1 11" stroke="#666" strokeWidth="2" />
        </Icon>
      </SearchBox>
    </AddressRow>
    <Panes>
      <Tree>
        {folders.map((name) => (
          <TreeItem key={name} href="#">
            <FolderIcon /> {name}
          </TreeItem>
        ))}
        {tempFolders.map((name) => (
          <TreeItem key={name} href="#" $child $current={name === "RarSFX0"}>
            <FolderIcon /> {name}
          </TreeItem>
        ))}
      </Tree>
      <VScroll>
        <ScrollButton aria-label="Scroll up">
          <ChevronIcon d="M1 7L4.500 3L8 7" />
        </ScrollButton>
        <VThumb />
        <ScrollButton aria-label="Scroll down">
          <ChevronIcon d="M1 2L4.500 6L8 2" />
        </ScrollButton>
      </VScroll>
      <FilePane>
        <TableWrap>
          <FileList />
        </TableWrap>
        <HScroll>
          <ScrollButton aria-label="Scroll left">
            <ChevronIcon d="M6.500 1L2.500 4.500L6.500 8" />
          </ScrollButton>
          <HThumb />
          <ScrollButton aria-label="Scroll right">
            <ChevronIcon d="M2.500 1L6.500 4.500L2.500 8" />
          </ScrollButton>
        </HScroll>
      </FilePane>
    </Panes>
    <StatusBar>
      <span>8 items</span>
      <span>8 items selected</span>
      <span>1.51 MB</span>
      <ViewButtons>
        <ViewButton $on aria-label="Details view">
          <Icon w={16} h={14}>
            <path d="M1.500 1.500H4.500V4.500H1.500ZM1.500 5.500H4.500V8.500H1.500ZM1.500 9.500H4.500V12.500H1.500Z" fill="#fff" stroke="#6b7f92" />
            <path d="M6 3H10M12 3H16M6 7H10M12 7H16M6 11H10M12 11H16" stroke="#4d5f70" />
          </Icon>
        </ViewButton>
        <ViewButton aria-label="Large icons view">
          <Icon w={14} h={12}>
            <rect x="0.500" y="0.500" width="13" height="10" fill="#fff" stroke="#8a8a8a" />
            <rect x="2" y="2" width="10" height="6" fill="#7db9e8" />
            <path d="M2 8V6L6 5L12 7V8Z" fill="#2b4f70" />
          </Icon>
        </ViewButton>
      </ViewButtons>
    </StatusBar>
  </ExplorerWindow>
);

const Loader = () => (
  <LoaderWindow>
    <LoaderTitle>
      <CaptionButton aria-label="Maximize">
        <MaxIcon color="#e2e2e2" />
      </CaptionButton>
      <CaptionButton aria-label="Close">
        <CloseIcon color="#888" />
      </CaptionButton>
    </LoaderTitle>
    <LoaderForm>
      <LoaderInput aria-label="First field" />
      <LoaderInput aria-label="Second field" />
      <LoaderInput aria-label="Third field" />
      <LoaderButton>Proceed</LoaderButton>
    </LoaderForm>
  </LoaderWindow>
);

const App = () => {
  return (
    <>
      <GlobalStyle />
      <Screen>
        <Desktop>
          <Wallpaper />
          <Shortcuts>
            <Shortcut aria-label="Recycle Bin">
              <RecycleBinIcon />
            </Shortcut>
            <Shortcut aria-label="Microsoft Edge">
              <EdgeShortcutIcon />
            </Shortcut>
            <Shortcut aria-label="Document">
              <WordIcon />
            </Shortcut>
          </Shortcuts>
          <Loader />
          <Explorer />
          <Watermark aria-hidden="true">
            <span>ANY</span>
            <Icon w={56} h={60}>
              <g stroke="#8fb0e4" strokeOpacity="0.75" strokeWidth="4" strokeLinejoin="round" strokeLinecap="round">
                <path d="M8 9H5L3 11V52L5 55H8L52 34" />
                <path d="M43 29L13 12V42" />
                <path d="M13 10V3L52 25L13 46" />
              </g>
            </Icon>
            <span>RUN</span>
          </Watermark>
          <BuildInfo>
            Test Mode
            <br />
            Windows 10 Pro
            <br />
            Build 19041.vb_release.191206-1406
          </BuildInfo>
        </Desktop>
        <Taskbar>
          <StartButton aria-label="Start">
            <Icon w={16}>
              <path d="M0 2.300L6.500 1.400V7.500H0ZM7.500 1.200L16 0V7.500H7.500ZM0 8.500H6.500V14.600L0 13.700ZM7.500 8.500H16V16L7.500 14.800Z" fill="#fff" />
            </Icon>
          </StartButton>
          <TaskSearch>
            <Icon w={18}>
              <circle cx="11" cy="6.500" r="5.500" stroke="#222" strokeWidth="1.300" />
              <path d="M7 10.500L1 16.500" stroke="#222" strokeWidth="1.300" />
            </Icon>
            <TaskSearchInput aria-label="Type here to search" placeholder="Type here to search" />
            <EarthArt />
          </TaskSearch>
          <TaskButton $first aria-label="Task view">
            <Icon w={18}>
              <path d="M1.500 1V4.500H12.500V1M1.500 17V13.500H12.500V17M1.500 5.500V12.500M12.500 5.500V12.500M16.500 1V5M16.500 10V17" stroke="#fff" strokeWidth="1.200" />
              <rect x="15" y="6" width="3" height="3" fill="#fff" />
            </Icon>
          </TaskButton>
          <TaskButton aria-label="Microsoft Edge">
            <EdgeIcon w={25} id="task" />
          </TaskButton>
          <TaskButton $active aria-label="File Explorer">
            <ExplorerIcon />
          </TaskButton>
          <TaskButton aria-label="Firefox">
            <FirefoxIcon />
          </TaskButton>
          <TaskButton $running aria-label="Loader">
            <AppIcon />
          </TaskButton>
          <Tray>
            <TrayButton aria-label="Show hidden icons">
              <ChevronIcon d="M1 8L6.500 2L12 8" w={13} h={10} color="#fff" sw={1} />
            </TrayButton>
            <TrayButton aria-label="Meet now">
              <Icon w={13} h={16}>
                <rect x="1.500" y="5" width="7" height="6" rx="1" stroke="#fff" />
                <path d="M9 7L11.500 5.500V10.500L9 9M3 2.500C5 1 8 1 10 2.500M3 13.500C5 15 8 15 10 13.500" stroke="#fff" />
              </Icon>
            </TrayButton>
            <TrayButton aria-label="Network">
              <Icon w={17} h={16}>
                <path d="M5 3.500H15.500V11.500H4.500V7M9.500 11.500V14.500M6 14.500H13M1.500 1.500H5.500V5.500H1.500ZM3.500 6V14.500" stroke="#fff" />
              </Icon>
            </TrayButton>
            <TrayButton aria-label="Volume">
              <Icon w={17} h={16}>
                <path d="M1.500 5.500H3.500L7.500 2V13L3.500 10H1.500ZM9.500 5.500C10.500 7 10.500 9 9.500 10.500M11.500 4C13.500 6 13.500 9.500 11.500 11.500M13.500 2.500C16.500 5.500 16.500 10 13.500 13" stroke="#fff" />
              </Icon>
            </TrayButton>
            <Clock>
              10:10 AM
              <br />
              10/7/2024
            </Clock>
            <Notices aria-label="Notifications">
              <Icon w={16}>
                <path d="M0.500 1.500H15.500V12.500H11L8 15.500V12.500H0.500Z" stroke="#fff" />
              </Icon>
            </Notices>
          </Tray>
        </Taskbar>
      </Screen>
    </>
  );
};

export default App;
